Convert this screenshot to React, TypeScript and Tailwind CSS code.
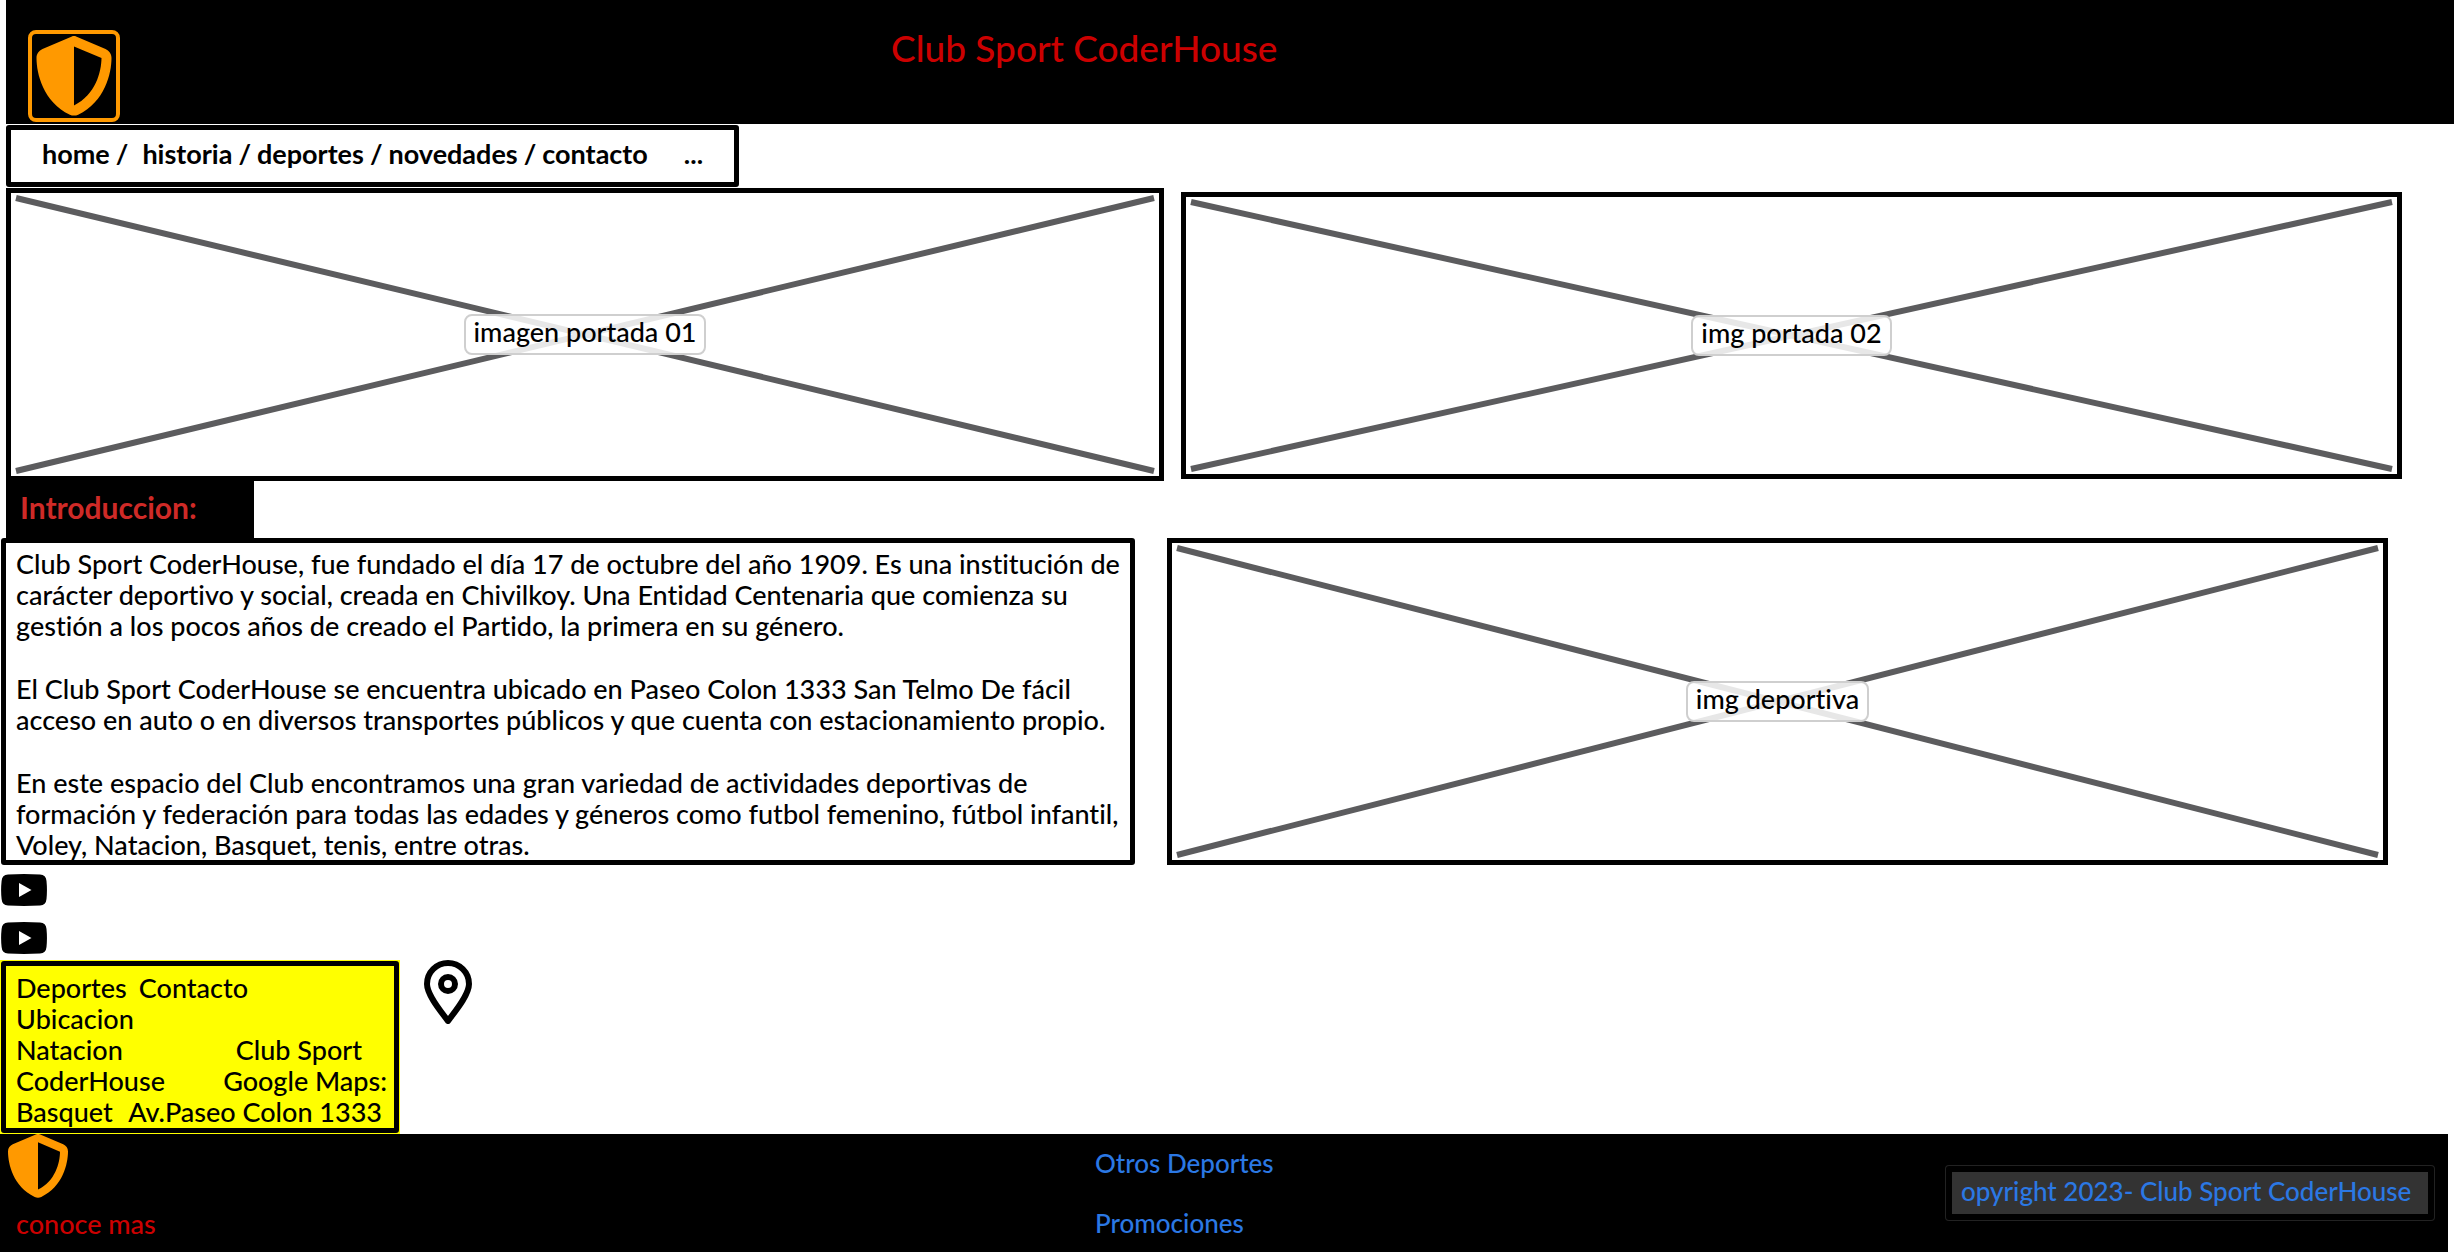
import React from "react";
import { FaShieldHalved } from "react-icons/fa6";

const NAV = ["home", "historia", "deportes", "novedades", "contacto"];

function Placeholder({ label, className }: { label: string; className: string }) {
  return (
    <figure className={`relative flex items-center justify-center border-[5px] border-black bg-white ${className}`}>
      <svg
        className="absolute inset-[5px] h-[calc(100%-10px)] w-[calc(100%-10px)] overflow-visible"
        viewBox="0 0 100 100"
        preserveAspectRatio="none"
        stroke="#5c5c5e"
        strokeWidth="6"
        aria-hidden="true"
      >
        <line x1="0" y1="0" x2="100" y2="100" vectorEffect="non-scaling-stroke" />
        <line x1="0" y1="100" x2="100" y2="0" vectorEffect="non-scaling-stroke" />
      </svg>
      <figcaption className="relative rounded-lg border-2 border-[#cfcfcf] bg-white/85 px-2 pb-1.5">{label}</figcaption>
    </figure>
  );
}

function VideoIcon() {
  return (
    <svg width="46" height="32" viewBox="0 0 46 32" aria-hidden="true">
      <path d="M7 .6Q23-.4 39 .6Q45 1 45.500 7Q46.400 16 45.500 25Q45 31 39 31.500Q23 32.400 7 31.500Q1 31 .6 25Q-.4 16 .6 7Q1 1 7 .6Z" fill="#000" />
      <path d="M18 9v14l12.500-7z" fill="#fff" />
    </svg>
  );
}

function PinIcon() {
  return (
    <svg width="48" height="64" viewBox="0 0 48 64" fill="none" stroke="#000" strokeWidth="6" strokeLinejoin="round" aria-label="Ubicacion">
      <path d="M24 61C20 55 3 36 3 24a21 21 0 0 1 42 0C45 36 28 55 24 61Z" />
      <circle cx="24" cy="24" r="7" />
    </svg>
  );
}

export default function App() {
  return (
    <div className="bg-white font-['Lato',sans-serif] text-[27px] font-medium leading-[31px] text-black [font-variant-ligatures:none]">
      <header className="ml-1.5 grid h-[124px] grid-cols-[885fr_1563fr] items-start bg-black">
        <a href="#inicio" aria-label="Inicio" className="ml-[22px] mt-[30px] w-fit rounded-lg border-4 border-[#ff9900] p-0.5 text-[#ff9900]">
          <FaShieldHalved size={80} />
        </a>
        <h1 className="mt-[26px] text-[37px] leading-[44px] text-[#cc0000]">Club Sport CoderHouse</h1>
      </header>

      <nav className="ml-1.5 mt-px flex h-[62px] w-[733px] items-start rounded-[3px] border-[5px] border-black pl-[31px] pt-2 font-bold">
        <ul className="flex gap-1.5">
          {NAV.map((item, i) => (
            <li key={item} className="flex gap-1.5">
              <a href={`#${item}`}>{item}</a>
              {i < NAV.length - 1 && <span className={i === 0 ? "mr-2" : ""}>/</span>}
            </li>
          ))}
        </ul>
        <button type="button" aria-label="Ver mas" className="ml-9">...</button>
      </nav>

      <main>
        <section className="mt-px grid grid-cols-[1158fr_1221fr] items-start gap-[17px] pl-1.5 pr-[52px]">
          <Placeholder label="imagen portada 01" className="h-[293px]" />
          <Placeholder label="img portada 02" className="mt-1 h-[287px]" />
        </section>

        <h2 className="ml-1.5 h-[57px] w-[248px] bg-black pl-3.5 pt-2 text-[30px] font-bold leading-[36px] text-[#cf2a27]">Introduccion:</h2>

        <section className="grid grid-cols-[1134fr_1221fr] gap-8 pl-px pr-[66px]">
          <div className="flex flex-col gap-8 rounded-[3px] border-[5px] border-black pl-2.5 pt-[5px]">
            <p>
              Club Sport CoderHouse, fue fundado el día 17 de octubre del año 1909. Es una institución de carácter deportivo y
              social, creada en Chivilkoy. Una Entidad Centenaria que comienza su gestión a los pocos años de creado el Partido,
              la primera en su género.
            </p>
            <p>
              El Club Sport CoderHouse se encuentra ubicado en Paseo Colon 1333 San Telmo De fácil acceso en auto o en diversos
              transportes públicos y que cuenta con estacionamiento propio.
            </p>
            <p>
              En este espacio del Club encontramos una gran variedad de actividades deportivas de formación y federación para
              todas las edades y géneros como futbol femenino, fútbol infantil, Voley, Natacion, Basquet, tenis, entre otras.
            </p>
          </div>
          <Placeholder label="img deportiva" className="h-[327px]" />
        </section>

        <div className="ml-px mt-[9px] flex w-fit flex-col gap-4">
          <a href="#video-1" aria-label="Video 1"><VideoIcon /></a>
          <a href="#video-2" aria-label="Video 2"><VideoIcon /></a>
        </div>

        <section className="mt-1.5 flex items-start gap-6">
          <div className="h-[174px] w-[400px] bg-[#ffff00] p-px">
            <div className="h-full rounded-[3px] border-[5px] border-black pl-2.5 pt-1.5">
              <p className="flex gap-3"><span>Deportes</span><span>Contacto</span></p>
              <p>Ubicacion</p>
              <p className="flex justify-between pr-8"><span>Natacion</span><span>Club Sport</span></p>
              <p className="flex justify-between pr-[7px]"><span>CoderHouse</span><span>Google Maps:</span></p>
              <p className="flex justify-between pr-3"><span>Basquet</span><span>Av.Paseo Colon 1333</span></p>
            </div>
          </div>
          <PinIcon />
        </section>
      </main>

      <footer className="mr-1.5 grid h-[118px] grid-cols-[1095fr_851fr_auto] items-start bg-black text-[26px] text-[#2b78e4]">
        <div className="flex flex-col gap-2.5">
          <FaShieldHalved size={64} className="ml-1.5 text-[#ff9900]" />
          <a href="#conoce-mas" className="ml-4 w-fit text-[27px] text-[#cc0000]">conoce mas</a>
        </div>
        <div className="mt-3.5 flex flex-col items-start gap-[29px]">
          <a href="#otros-deportes">Otros Deportes</a>
          <a href="#promociones">Promociones</a>
        </div>
        <p className="mr-3.5 mt-8 h-[54px] w-[488px] rounded-[3px] border-[6px] border-black bg-[#333333] pl-[9px] pt-1 ring-1 ring-[#222222]">
          opyright 2023- Club Sport CoderHouse
        </p>
      </footer>
    </div>
  );
}
